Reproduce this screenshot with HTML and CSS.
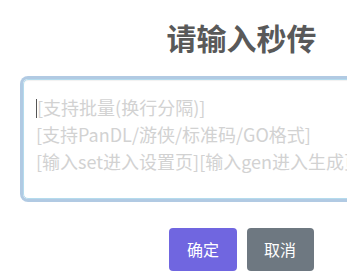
FILE: index.html
```html
<!DOCTYPE html>
<html lang="zh-CN">
<head>
<meta charset="utf-8">
<link rel="stylesheet" href="styles.css">
</head>
<body>
<div class="popup">
  <h2 class="title">请输入秒传</h2>
  <div class="input">
    <div class="line"><span class="caret"></span>[支持批量(换行分隔)]</div>
    <div class="line">[支持PanDL/游侠/标准码/GO格式]</div>
    <div class="line">[输入set进入设置页][输入gen进入生成页]</div>
  </div>
  <div class="actions">
    <button class="btn confirm">确定</button>
    <button class="btn cancel">取消</button>
  </div>
</div>
</body>
</html>
```

FILE: styles.css
```css
html, body {
  margin: 0;
  padding: 0;
  background: #fff;
  overflow: hidden;
  font-family: "Noto Sans CJK SC", "Noto Sans", sans-serif;
}

.popup {
  width: 502px;
  margin-left: -9.5px;
  display: flex;
  flex-direction: column;
}

.title {
  margin: 0;
  padding-top: 19px;
  font-size: 30px;
  line-height: 36px;
  font-weight: 700;
  color: #595959;
  text-align: center;
}

.input {
  margin: 24px 32px 0;
  height: 120px;
  box-sizing: border-box;
  border: 1px solid #b4dbed;
  border-radius: 5px;
  box-shadow: inset 0 1px 1px rgba(0, 0, 0, 0.06), 0 0 0 3px rgba(100, 150, 200, 0.5);
  padding: 13.5px 13.5px 13.5px 12.5px;
  font-size: 18px;
  line-height: 27px;
  color: #d2d2d2;
  white-space: nowrap;
  overflow: hidden;
}

.caret {
  display: inline-block;
  width: 0;
  height: 19px;
  border-left: 1px solid #555;
  vertical-align: -3px;
}

.actions {
  display: flex;
  justify-content: center;
  margin-top: 24px;
}

.btn {
  margin: 5px;
  padding: 10px 17.6px;
  border: 0;
  border-radius: 4px;
  font-family: inherit;
  font-size: 16px;
  line-height: 23px;
  color: #fff;
}

.confirm {
  background: #7066e0;
}

.cancel {
  background: #6e7881;
}
```
